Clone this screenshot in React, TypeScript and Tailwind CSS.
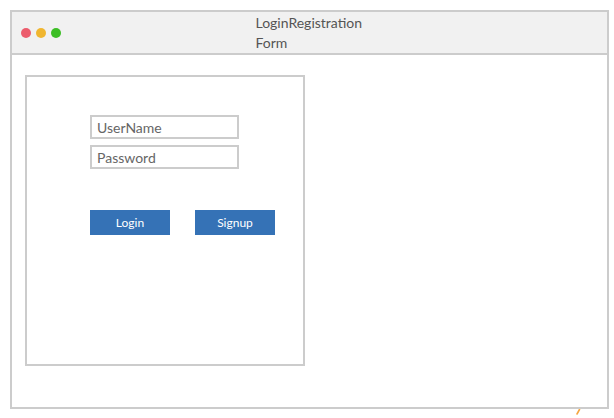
import React from "react";

export default function App() {
  return (
    <div className="w-[614px] h-[418px] bg-white relative" style={{ fontFamily: "Lato, 'Open Sans', sans-serif" }}>
      <div className="absolute left-[10px] top-[10px] w-[599px] h-[399px] border-2 border-[#cccccc] flex flex-col">
        <div className="h-[43px] shrink-0 bg-[#f1f1f1] border-b-2 border-[#cccccc] grid grid-cols-[1fr_108px_1fr] items-center">
          <div className="flex items-center gap-[5px] pl-[9px]">
            <span className="w-[10px] h-[10px] rounded-full bg-[#ec5c6c]" />
            <span className="w-[10px] h-[10px] rounded-full bg-[#f0b630]" />
            <span className="w-[10px] h-[10px] rounded-full bg-[#3cbe25]" />
          </div>
          <div className="text-[14px] leading-[20px] text-[#555555]">LoginRegistration Form</div>
          <div />
        </div>
        <div className="flex-1 pl-[13px] pt-[20px]">
          <div className="w-[280px] h-[291px] border-2 border-[#cccccc] pl-[63px] pt-[38px] flex flex-col">
            <div className="w-[149px] h-[24px] border-2 border-[#cccccc] pl-[5px] flex items-center text-[14px] text-[#666666]">UserName</div>
            <div className="w-[149px] h-[24px] border-2 border-[#cccccc] pl-[5px] flex items-center text-[14px] text-[#666666] mt-[6px]">Password</div>
            <div className="flex gap-[25px] mt-[41px]">
              <div className="w-[80px] h-[25px] bg-[#3572b6] text-white text-[12px] flex items-center justify-center">Login</div>
              <div className="w-[80px] h-[25px] bg-[#3572b6] text-white text-[12px] flex items-center justify-center">Signup</div>
            </div>
          </div>
        </div>
      </div>
      <svg className="absolute left-[575px] top-[409px]" width="6" height="6" viewBox="0 0 6 6">
        <line x1="4.5" y1="0.5" x2="2" y2="5" stroke="#f5a742" strokeWidth="1.6" strokeLinecap="round" />
      </svg>
    </div>
  );
}
